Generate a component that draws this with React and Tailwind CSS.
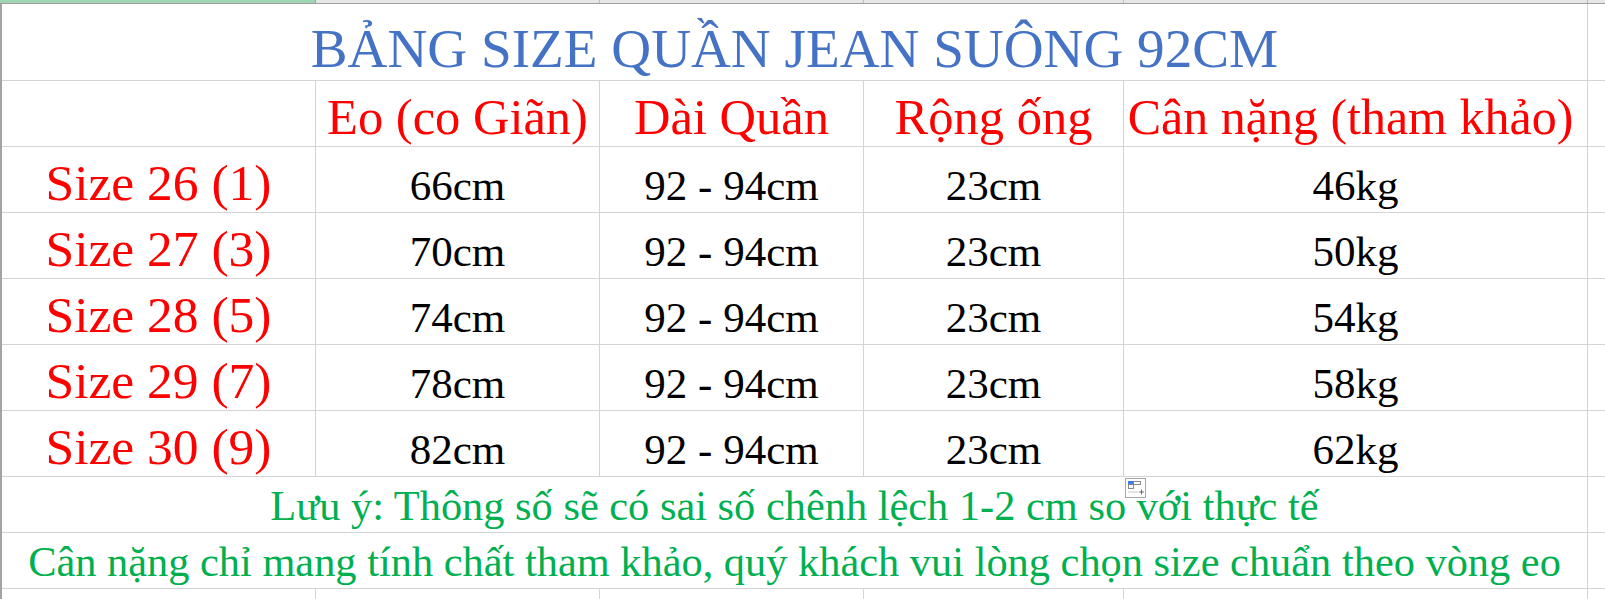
import React from "react";

const serif = { fontFamily: '"Liberation Serif", "Times New Roman", serif' };

const rows = [
  ["Size 26 (1)", "66cm", "46kg"],
  ["Size 27 (3)", "70cm", "50kg"],
  ["Size 28 (5)", "74cm", "54kg"],
  ["Size 29 (7)", "78cm", "58kg"],
  ["Size 30 (9)", "82cm", "62kg"],
];

const PasteIcon = () => (
  <svg width="21" height="20" viewBox="0 0 21 20" className="absolute left-[1125px] top-[478px]">
    <rect x="0.5" y="0.5" width="20" height="19" fill="#fff" stroke="#a6a6a6" />
    <rect x="3.5" y="3.5" width="5" height="3" fill="#3b7ded" stroke="#3b7ded" />
    <rect x="8.5" y="3.5" width="7" height="3" fill="none" stroke="#8a8a8a" />
    <rect x="3.5" y="6.5" width="5" height="4" fill="none" stroke="#8a8a8a" />
    <line x1="3.5" y1="14" x2="13" y2="14" stroke="#8a8a8a" strokeDasharray="1 1" />
    <line x1="14" y1="14" x2="19" y2="14" stroke="#6a6a6a" />
    <line x1="16.5" y1="11.5" x2="16.5" y2="16.5" stroke="#6a6a6a" />
  </svg>
);

export default function App() {
  return (
    <div className="relative w-[1605px] h-[599px] overflow-hidden bg-white" style={serif}>
      {/* column header strip */}
      <div className="flex h-[4px] border-b border-[#9e9e9e]">
        <div className="w-[316px] bg-[#9fd5b3] border-r border-[#9e9e9e]"></div>
        <div className="w-[284px] bg-[#e6e6e6] border-r border-[#bdbdbd]"></div>
        <div className="w-[264px] bg-[#e6e6e6] border-r border-[#bdbdbd]"></div>
        <div className="w-[260px] bg-[#e6e6e6] border-r border-[#bdbdbd]"></div>
        <div className="w-[464px] bg-[#e6e6e6] border-r border-[#bdbdbd]"></div>
        <div className="flex-1 bg-[#e6e6e6]"></div>
      </div>

      <div className="border-l-2 border-[#a3a3a3]">
        {/* title */}
        <div className="flex h-[77px] border-b border-[#d4d4d4]">
          <div className="w-[1586px] border-r border-[#d4d4d4] flex items-end justify-center pb-[4px]">
            <span className="text-[55.2px] leading-none text-[#4472c4]">BẢNG SIZE QUẦN JEAN SUÔNG 92CM</span>
          </div>
          <div className="flex-1"></div>
        </div>

        {/* header */}
        <div className="flex h-[66px] border-b border-[#d4d4d4] text-[#ff0000] text-[50.5px] leading-none">
          <div className="w-[314px] border-r border-[#d4d4d4]"></div>
          <div className="w-[284px] border-r border-[#d4d4d4] flex items-end justify-center pb-[4px]">Eo (co Giãn)</div>
          <div className="w-[264px] border-r border-[#d4d4d4] flex items-end justify-center pb-[4px]">Dài Quần</div>
          <div className="w-[260px] border-r border-[#d4d4d4] flex items-end justify-center pb-[4px]">Rộng ống</div>
          <div className="w-[464px] border-r border-[#d4d4d4] flex items-end justify-center pb-[4px] pr-[10px] text-[50px]">Cân nặng (tham khảo)</div>
          <div className="flex-1"></div>
        </div>

        {/* data rows */}
        {rows.map(([size, eo, kg]) => (
          <div key={size} className="flex h-[66px] border-b border-[#d4d4d4] leading-none">
            <div className="w-[314px] border-r border-[#d4d4d4] flex items-end justify-center pb-[4px] text-[51.5px] text-[#ff0000]">{size}</div>
            <div className="w-[284px] border-r border-[#d4d4d4] flex items-end justify-center pb-[5px] text-[43px] text-black">{eo}</div>
            <div className="w-[264px] border-r border-[#d4d4d4] flex items-end justify-center pb-[5px] text-[43px] text-black">92 - 94cm</div>
            <div className="w-[260px] border-r border-[#d4d4d4] flex items-end justify-center pb-[5px] text-[43px] text-black">23cm</div>
            <div className="w-[464px] border-r border-[#d4d4d4] flex items-end justify-center pb-[5px] text-[43px] text-black">{kg}</div>
            <div className="flex-1"></div>
          </div>
        ))}

        {/* notes */}
        <div className="flex h-[56px] border-b border-[#d4d4d4] text-[#00b050] text-[42.4px] leading-none">
          <div className="w-[1586px] border-r border-[#d4d4d4] flex items-end justify-center pb-[5px]">
            Lưu ý: Thông số sẽ có sai số chênh lệch 1-2 cm so với thực tế
          </div>
          <div className="flex-1"></div>
        </div>
        <div className="flex h-[56px] border-b border-[#d4d4d4] text-[#00b050] text-[42.4px] leading-none">
          <div className="w-[1586px] border-r border-[#d4d4d4] flex items-end justify-center pb-[5px]">
            Cân nặng chỉ mang tính chất tham khảo, quý khách vui lòng chọn size chuẩn theo vòng eo
          </div>
          <div className="flex-1"></div>
        </div>

        {/* partial row */}
        <div className="flex h-[20px]">
          <div className="w-[314px] border-r border-[#d4d4d4]"></div>
          <div className="w-[284px] border-r border-[#d4d4d4]"></div>
          <div className="w-[264px] border-r border-[#d4d4d4]"></div>
          <div className="w-[260px] border-r border-[#d4d4d4]"></div>
          <div className="w-[464px] border-r border-[#d4d4d4]"></div>
          <div className="flex-1"></div>
        </div>
      </div>

      <PasteIcon />
    </div>
  );
}
